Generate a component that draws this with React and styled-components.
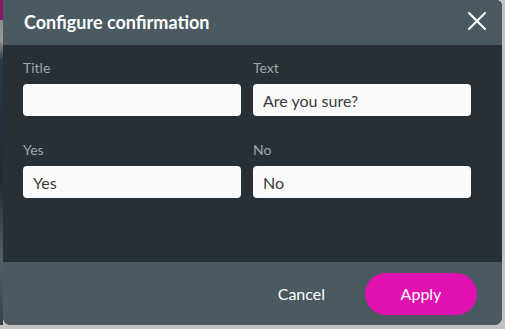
import React from "react";
import styled, { createGlobalStyle } from "styled-components";

const GlobalStyle = createGlobalStyle`
  html, body {
    margin: 0;
    padding: 0;
    background: #c2c2c2;
    font-family: "Lato", "Noto Sans", sans-serif;
  }
`;

const Page = styled.div`
  display: flex;
  width: 505px;
  height: 329px;
  overflow: hidden;
`;

const Backdrop = styled.div`
  width: 3px;
  height: 325px;
  background: linear-gradient(
    to bottom,
    #8c1466 0,
    #8c1466 20px,
    #8a8a8a 20px,
    #9a9a9a 40px,
    #2b3a48 60px,
    #1f2a33 180px,
    #55606a 260px,
    #3a3f45 325px
  );
`;

const Dialog = styled.div`
  width: 499px;
  height: 325px;
  display: flex;
  flex-direction: column;
  border-radius: 0 6px 8px 8px;
  overflow: hidden;
  background: #273037;
`;

const Header = styled.div`
  height: 45px;
  flex: none;
  display: flex;
  align-items: center;
  justify-content: space-between;
  padding: 0 14px 0 21px;
  background: #4b5a61;
`;

const Title = styled.h1`
  margin: 0 0 1px;
  font-size: 18px;
  font-weight: 700;
  color: #ffffff;
`;

const CloseButton = styled.button`
  border: 0;
  background: none;
  padding: 0;
  width: 22px;
  height: 22px;
  margin-top: -4px;
  display: flex;
  align-items: center;
  justify-content: center;
  cursor: pointer;
`;

const Body = styled.div`
  flex: 1;
  display: grid;
  grid-template-columns: 218px 218px;
  column-gap: 12px;
  row-gap: 26px;
  align-content: start;
  padding: 15px 31px 0 20px;
`;

const Field = styled.div`
  display: flex;
  flex-direction: column;
`;

const Label = styled.label`
  font-size: 14px;
  line-height: 16px;
  color: #a2a6a9;
  margin-bottom: 8px;
`;

const Input = styled.input`
  box-sizing: border-box;
  height: 32px;
  width: 100%;
  border: 0;
  border-radius: 4px;
  background: #fafafa;
  padding: 0 10px;
  font-family: "Lato", "Noto Sans", sans-serif;
  font-size: 16px;
  color: #3a3a3a;
  outline: none;
`;

const Footer = styled.div`
  height: 63px;
  flex: none;
  display: flex;
  align-items: center;
  justify-content: flex-end;
  padding: 0 25px 0 0;
  background: #4b5a61;
`;

const TextButton = styled.button`
  border: 0;
  background: none;
  padding: 0 20px;
  margin-right: 20px;
  font-family: "Lato", "Noto Sans", sans-serif;
  font-size: 16px;
  color: #ffffff;
  cursor: pointer;
`;

const PrimaryButton = styled.button`
  width: 112px;
  height: 42px;
  border: 0;
  border-radius: 21px;
  background: #e011b0;
  font-family: "Lato", "Noto Sans", sans-serif;
  font-size: 16px;
  color: #ffffff;
  cursor: pointer;
`;

const fields = [
  { label: "Title", value: "" },
  { label: "Text", value: "Are you sure?" },
  { label: "Yes", value: "Yes" },
  { label: "No", value: "No" },
];

export default function App() {
  return (
    <>
      <GlobalStyle />
      <Page>
        <Backdrop />
        <Dialog>
          <Header>
            <Title>Configure confirmation</Title>
            <CloseButton aria-label="Close">
              <svg width="18" height="18" viewBox="0 0 18 18">
                <path
                  d="M1 1 L17 17 M17 1 L1 17"
                  stroke="#ffffff"
                  strokeWidth="2"
                  strokeLinecap="square"
                />
              </svg>
            </CloseButton>
          </Header>
          <Body>
            {fields.map((f) => (
              <Field key={f.label}>
                <Label>{f.label}</Label>
                <Input defaultValue={f.value} />
              </Field>
            ))}
          </Body>
          <Footer>
            <TextButton>Cancel</TextButton>
            <PrimaryButton>Apply</PrimaryButton>
          </Footer>
        </Dialog>
      </Page>
    </>
  );
}
